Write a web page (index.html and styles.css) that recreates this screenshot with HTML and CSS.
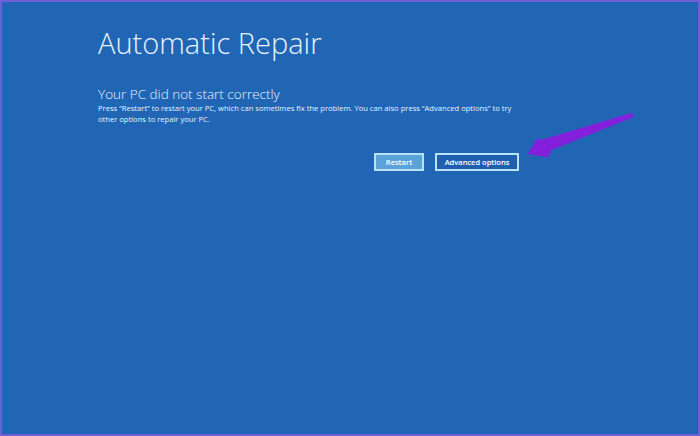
FILE: index.html
```html
<!DOCTYPE html>
<html>
<head>
<meta charset="utf-8">
<link rel="stylesheet" href="styles.css">
</head>
<body>
<div class="screen">
  <div class="content">
    <h1 class="title">Automatic Repair</h1>
    <h2 class="subtitle">Your PC did not start correctly</h2>
    <p class="desc">Press “Restart” to restart your PC, which can sometimes fix the problem. You can also press “Advanced options” to try other options to repair your PC.</p>
    <div class="actions">
      <button class="btn btn-primary">Restart</button>
      <button class="btn btn-secondary">Advanced options</button>
    </div>
  </div>
  <svg class="arrow" width="125" height="65" viewBox="0 0 125 65">
    <path d="M117 13 L118 17 L36 50 L33 57 L13 54 L22 39 L27 40 Z" fill="#8420dc" stroke="#8420dc" stroke-width="0.6" stroke-linejoin="round"/>
  </svg>
</div>
</body>
</html>
```
FILE: styles.css
```css
html, body {
  margin: 0;
  padding: 0;
}
body {
  width: 700px;
  height: 436px;
  overflow: hidden;
}
.screen {
  position: relative;
  box-sizing: border-box;
  width: 700px;
  height: 436px;
  background: #2066b5;
  border: 2px solid #6f5fd6;
  font-family: "Open Sans", "Noto Sans", sans-serif;
  color: #ffffff;
}
.content {
  padding: 23px 0 0 96px;
  width: 430px;
}
.title {
  margin: 0;
  font-weight: 300;
  font-size: 29px;
  line-height: 36px;
  color: #e8f3ff;
}
.subtitle {
  margin: 24px 0 0 0;
  font-weight: 300;
  font-size: 13.5px;
  line-height: 18px;
  color: #e8f3ff;
}
.desc {
  margin: 0;
  font-size: 7.6px;
  line-height: 11px;
  color: #e8f3ff;
}
.actions {
  display: flex;
  justify-content: flex-end;
  gap: 11px;
  margin-top: 28px;
  margin-right: 9px;
}
.btn {
  box-sizing: border-box;
  height: 18px;
  padding: 0 8px;
  border: 2px solid #b9e2f5;
  background: #1f5fae;
  color: #ffffff;
  font-family: "Open Sans", "Noto Sans", sans-serif;
  font-size: 7.5px;
  font-weight: 600;
  line-height: 14px;
}
.btn-primary {
  width: 50px;
  background: #5aa2d8;
}
.btn-secondary {
  width: 84px;
  padding: 0;
}
.arrow {
  position: absolute;
  left: 513px;
  top: 98px;
}
```
